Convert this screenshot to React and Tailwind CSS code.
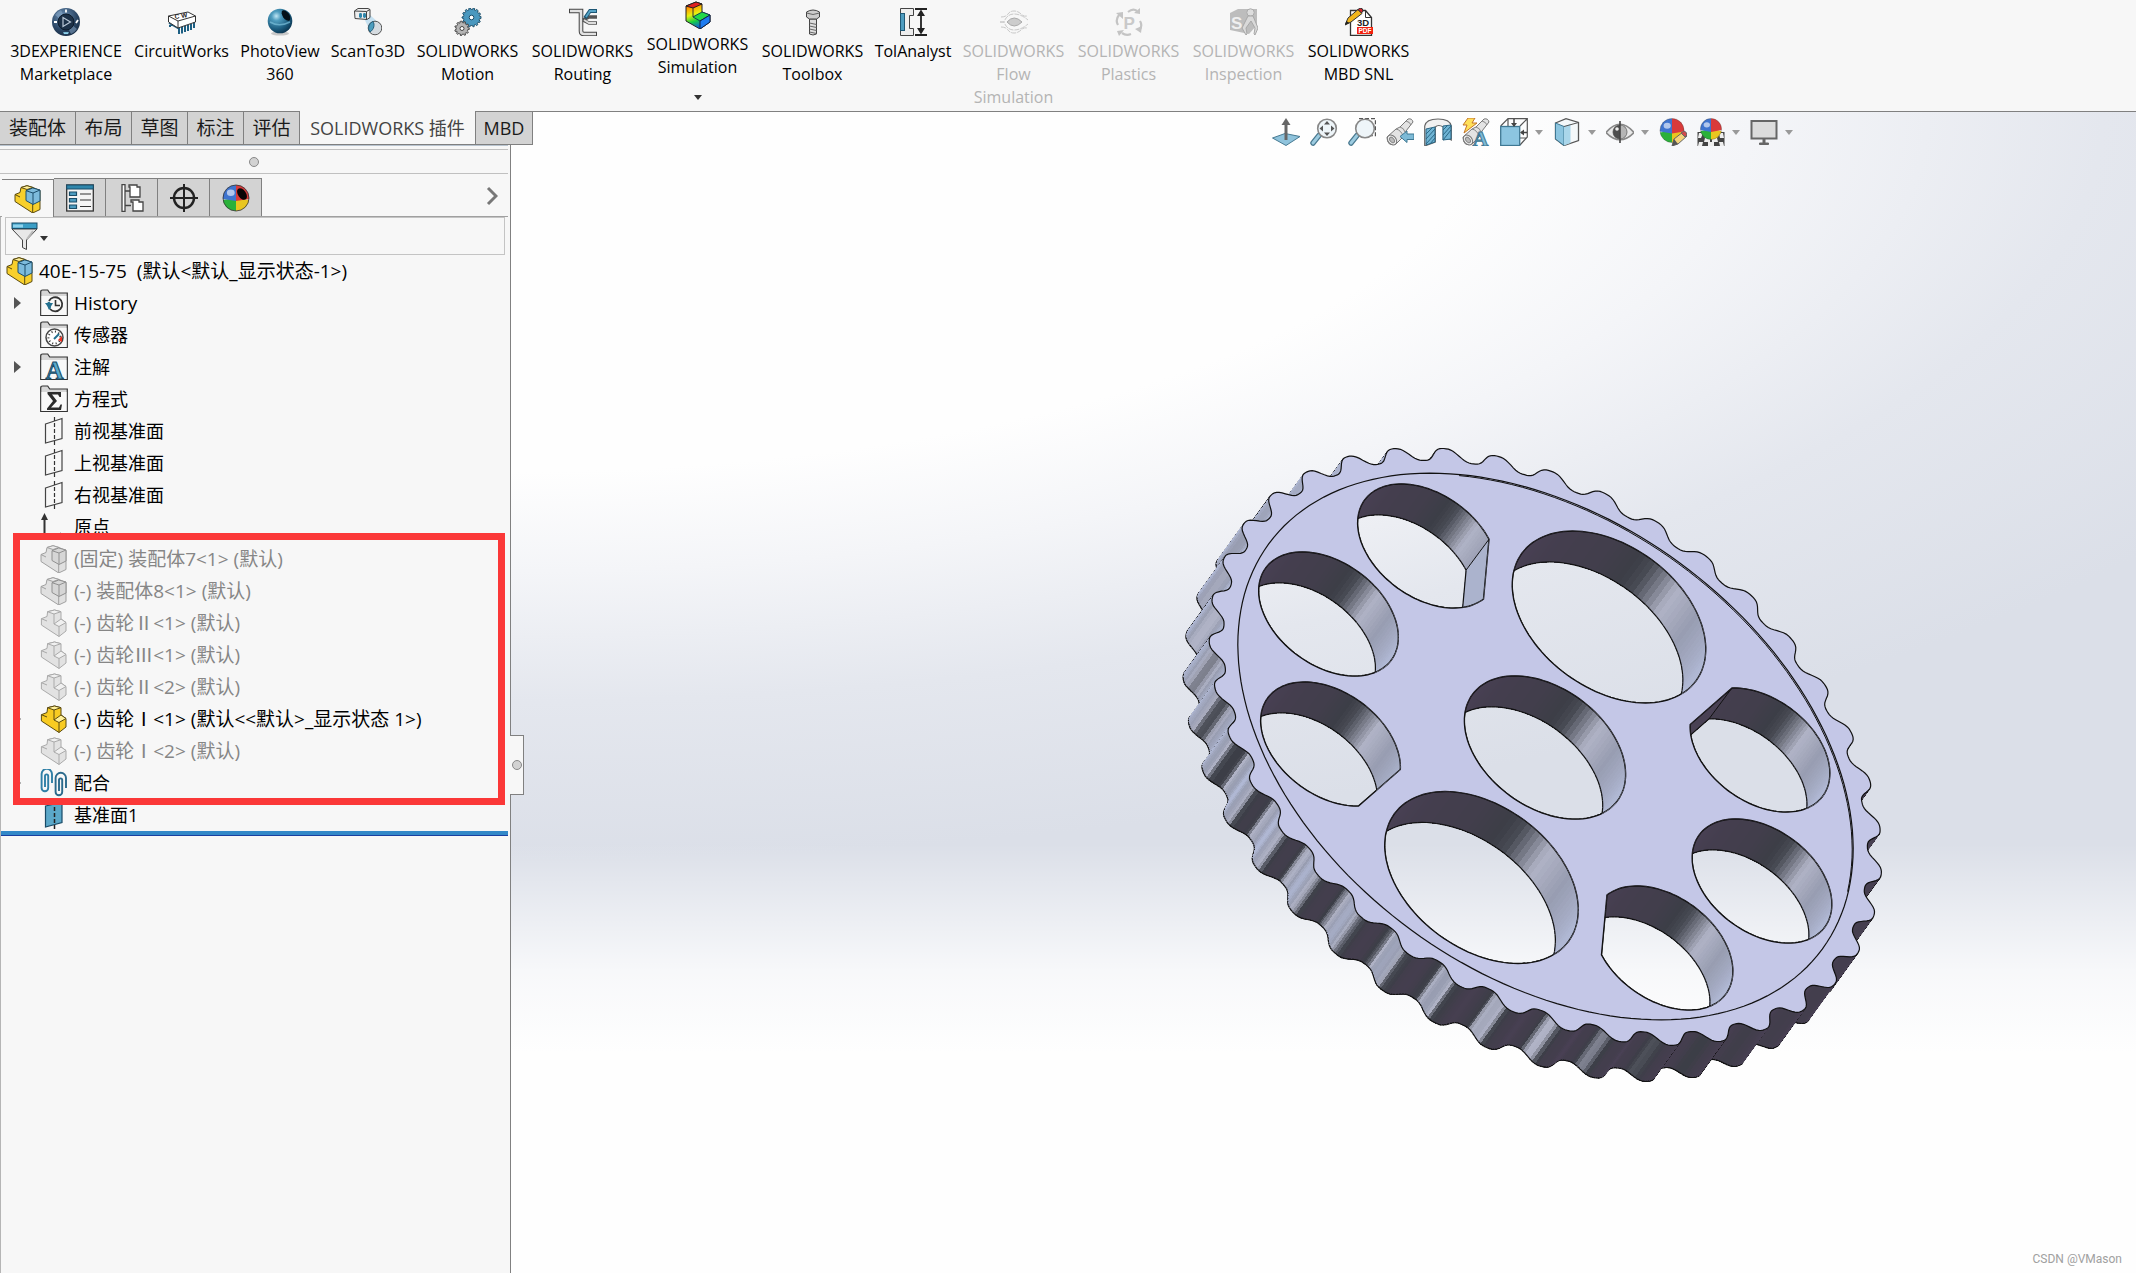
import { useState } from 'react';
import clsx from 'clsx';

const FONT = "font-['Open_Sans','Noto_Sans_CJK_SC',sans-serif]";

/* ---------- toolbar icons ---------- */

function Svg({ size = 28, children }) {
  return (
    <svg width={size} height={size} viewBox="0 0 28 28" fill="none" aria-hidden="true">
      {children}
    </svg>
  );
}

const gearPath = (cx, cy, r, depth, teeth) => {
  const pts = [];
  const n = teeth * 8;
  for (let i = 0; i < n; i++) {
    const t = (i / n) * Math.PI * 2;
    const k = r + (Math.cos(t * teeth) > 0 ? 0 : -depth);
    pts.push(`${(cx + k * Math.cos(t)).toFixed(2)} ${(cy + k * Math.sin(t)).toFixed(2)}`);
  }
  return `M${pts.join('L')}Z`;
};

const MarketplaceIcon = () => (
  <Svg>
    <defs>
      <radialGradient id="mk" cx="0.4" cy="0.3" r="0.8">
        <stop offset="0" stopColor="#6f93b8" />
        <stop offset="0.6" stopColor="#2b4766" />
        <stop offset="1" stopColor="#14263c" />
      </radialGradient>
    </defs>
    <circle cx="14" cy="14" r="14" fill="url(#mk)" />
    <path d="M3 7A13 13 0 0 1 9 2L12 8 8 11ZM25 21a13 13 0 0 1-6 5l-3-6 4-3Z" fill="#8fb0d0" opacity="0.5" />
    <circle cx="14" cy="14" r="8" fill="#1d3148" stroke="#0e1c2c" />
    <path d="M11 9.5v9l7.5-4.5Z" stroke="#b9c7d6" strokeWidth="1.2" />
    <path d="M14 1.5v3M2 14h3M24 15l2-3" stroke="#fff" strokeWidth="1.8" />
    <path d="M12 24c0 2 2 2 2 0 0 2 2 2 2 0" stroke="#8fd3ee" strokeWidth="1.4" />
  </Svg>
);

const CircuitIcon = () => (
  <Svg>
    <path d="M1 15l9 5v-6M2 14v5M11 19v7M14 18.5v7M17 18v6M20 17v6M23 16v6M26 14v6" stroke="#1d5f83" strokeWidth="2" />
    <path d="M.5 8 20 4l7.5 4v6L10 20 .5 14Z" fill="#fff" stroke="#333" />
    <path d="M.5 8 10 13l17.5-5M10 13v7" stroke="#333" />
    <text x="7" y="11" fontSize="6.5" fontWeight="700" fill="#222" fontFamily="Liberation Sans" transform="rotate(-9 7 11)">C W</text>
  </Svg>
);

const PhotoViewIcon = () => (
  <Svg>
    <defs>
      <radialGradient id="pv" cx="0.35" cy="0.3" r="0.75">
        <stop offset="0" stopColor="#bfe6f5" />
        <stop offset="0.25" stopColor="#4f9dbf" />
        <stop offset="0.7" stopColor="#1c5d80" />
        <stop offset="1" stopColor="#0c3550" />
      </radialGradient>
    </defs>
    <ellipse cx="14" cy="25.5" rx="9" ry="2" fill="#999" opacity="0.5" />
    <circle cx="14" cy="13" r="12.3" fill="url(#pv)" />
    <ellipse cx="20" cy="7.5" rx="3.3" ry="6" transform="rotate(-35 20 7.5)" fill="#041018" />
    <path d="M4 14c5 3 12 4 20 0" stroke="#7cc1dc" opacity="0.7" strokeWidth="1.5" />
  </Svg>
);

const ScanIcon = () => (
  <Svg>
    <path d="M9 8l6-2 12 11-10 8Z" fill="#bcdcee" opacity="0.85" />
    <path d="M.5 3 4 .5h10l2 1v8l-3 2-12-1Z" fill="#eee" stroke="#444" />
    <path d="M.5 3l12 .5L16 1.5M12.500 3.500v8" stroke="#444" />
    <rect x="5" y="5" width="3" height="5" rx="1.400" fill="#2f86ab" />
    <rect x="9" y="5" width="3" height="5" rx="1.400" fill="#2f86ab" />
    <circle cx="21" cy="20" r="6.8" fill="#d5dbe0" stroke="#555" />
    <path d="M16 24A6.8 6.8 0 0 1 19 13.5c2 3 1 8-3 10.5Z" fill="#4c9dbe" stroke="#245f7b" />
  </Svg>
);

const MotionIcon = () => (
  <Svg>
    <path d={gearPath(17.5, 9.5, 9.5, 1.5, 14)} fill="#4a98bf" stroke="#1d4d68" />
    <circle cx="17.5" cy="9.5" r="2.3" fill="#fff" stroke="#1d4d68" />
    <path d={gearPath(8, 20.5, 7.3, 1.5, 11)} fill="#b5b5b5" stroke="#444" />
    <circle cx="8" cy="20.5" r="2" fill="#fff" stroke="#444" />
  </Svg>
);

const RoutingIcon = () => (
  <Svg>
    <path d="M0 3h12v20q0 3 3 3h13" stroke="#444" strokeWidth="4.6" />
    <path d="M1 3h11v20q0 3 3 3h12" stroke="#e2e2e2" strokeWidth="2.6" />
    <path d="M28 9h-8l-6 3M28 15h-8l-6-3" stroke="#555" strokeWidth="3.6" />
    <path d="M27 15h-7l-5-3" stroke="#ddd" strokeWidth="1.8" />
    <path d="M28 3h-7l-5 7" stroke="#1d5775" strokeWidth="3.8" />
    <path d="M27 3h-6l-4 6" stroke="#57a5c8" strokeWidth="1.8" />
  </Svg>
);

const SimulationIcon = () => (
  <Svg>
    <defs>
      <linearGradient id="sim" x1="0" y1="0" x2="0.3" y2="1">
        <stop offset="0" stopColor="#f01818" />
        <stop offset="0.25" stopColor="#ff9d00" />
        <stop offset="0.5" stopColor="#e8f010" />
        <stop offset="0.75" stopColor="#18d040" />
        <stop offset="1" stopColor="#1060e0" />
      </linearGradient>
    </defs>
    <path d="M2 5 12 1l6 2v8l8 3v7l-10 7L2 20Z" fill="url(#sim)" stroke="#222" />
    <path d="M9 16l9-5 8 3-10 6Z" fill="#20d84a" stroke="#145" />
    <path d="M16 20v8l10-7v-7Z" fill="#1d7bf0" stroke="#124" />
    <path d="M2 5 12 1l6 2-9 4Z" fill="#e02020" stroke="#222" />
    <path d="M9 7v9" stroke="#333" />
  </Svg>
);

const BoltIcon = () => (
  <Svg>
    <path d="M10.5 11h7v15q-3.5 2-7 0Z" fill="#ddd" stroke="#444" />
    <path d="M10.5 15l7 1.5M10.5 18l7 1.5M10.5 21l7 1.5M10.5 24l7 1.5" stroke="#666" />
    <path d="M7.5 4q6.5-4 13 0v5l-3 2h-7l-3-2Z" fill="#ccc" stroke="#444" />
    <path d="M7.5 5q6.5 3 13 0" stroke="#666" />
  </Svg>
);

const TolIcon = () => (
  <Svg>
    <path d="M1.5 .5h13v7h-4v13h4v7h-13Z" fill="#eee" stroke="#444" />
    <rect x="1.5" y="5.5" width="4" height="17" fill="#4d9cc0" stroke="#1d5775" />
    <path d="M16 1h12M16 27h12M22 3v22" stroke="#222" strokeWidth="1.8" />
    <path d="M22 1.5l4 6.5h-8ZM22 26.5l4-6.5h-8Z" fill="#222" />
  </Svg>
);

const FlowIcon = () => (
  <Svg>
    <path d="M7 14q7-8 15 0-8 8-15 0Z" fill="#ccc" stroke="#aaa" />
    <path
      d="M0 14h4q3-8 10-8t14 6M0 14h4q3 8 10 8t14-6M1 9q5 0 7-3t6-3 7 3 6 2M1 19q5 0 7 3t6 3 7-3 6-2"
      stroke="#c8c8c8"
      strokeDasharray="5 1"
    />
  </Svg>
);

const PlasticsIcon = () => (
  <Svg>
    <text x="8.5" y="20.5" fontSize="17" fontWeight="700" fill="#c9c9c9" fontFamily="Liberation Sans">P</text>
    <path d="M13 4q5-4 9-1M25 13q3 5-1 10M16 26q-5 2-9-1M3 17q-3-5 1-10" stroke="#c4c4c4" strokeWidth="2.2" />
    <path d="M19 5l6 1V0ZM20 21l6 4 1-7ZM9 22l-7 1 2 5ZM1 5l7 6V4Z" fill="#c4c4c4" />
  </Svg>
);

const InspectionIcon = () => (
  <Svg>
    <path d="M0 5 8 1h19v16l-8 9-19-4Z" fill="#bdbdbd" />
    <text x="1" y="21" fontSize="17" fontWeight="700" fill="#efefef" fontFamily="Liberation Sans">S</text>
    <circle cx="20.5" cy="4.5" r="3.7" fill="#ddd" stroke="#aaa" />
    <path d="M18 8h5l5 12-3 7-1-1 1-6-4-7-5 7 1 6-1 1-4-7Z" fill="#d9d9d9" stroke="#a8a8a8" />
  </Svg>
);

const MbdIcon = () => (
  <Svg>
    <path d="M5.5 2.5h15l6 7v18h-21Z" fill="#fff" stroke="#333" strokeWidth="1.3" />
    <path d="M20.5 2.5v7h6" stroke="#333" />
    <text x="12" y="18" fontSize="9.5" fontWeight="700" fill="#222" fontFamily="Liberation Sans">3D</text>
    <rect x="12" y="19" width="16" height="7" fill="#f3200e" />
    <text x="13.5" y="25" fontSize="6.5" fontWeight="700" fill="#fff" fontFamily="Liberation Sans">PDF</text>
    <path d="M0 17l3-7L13 1.5l4 4L6 14Z" fill="#f2b61c" stroke="#333" />
    <path d="M13 1.5 15 0q3 0 3 3l-1.5 2Z" fill="#d5262c" stroke="#333" />
    <path d="M0 17l1.5-4 3 2Z" fill="#222" />
  </Svg>
);

/* ---------- tree icons ---------- */

function AssemblyIcon({ muted }) {
  const line = muted ? '#a0a0a0' : '#5a4a10';
  const body = muted ? '#e0e0e0' : '#f8d02c';
  const top = muted ? '#ececec' : '#fff09a';
  const cube = muted ? '#909090' : '#1c4e6c';
  return (
    <Svg>
      <path d="M1 9.5 6 7.5 7 2.5 13 .7l6 1.8 7 3v19L18.7 28 1 16.5Z" fill={body} stroke={line} />
      <path d="M7 2.5 13 .7l6 1.8-6 2Z" fill={top} stroke={line} />
      <path d="M18.7 19v9M1 9.5l5 2.5" stroke={line} />
      <path d="M12 5.7 18.7 3 26 5v11l-7 3.5-7-4Z" fill={muted ? '#d6d6d6' : '#7dbbdc'} stroke={cube} />
      <path d="M12 5.7 19 8l7-3M19 8v11" stroke={cube} />
    </Svg>
  );
}

function PartIcon({ muted }) {
  const line = muted ? '#aaa' : '#5a4a10';
  return (
    <Svg>
      <path
        d="M1.4 9.7 7 7.5 7.6 2.7 14.500 1 21 2.7V10l5 3.500V22l-7 5.500L1.4 16Z"
        fill={muted ? '#e2e2e2' : '#f8cb22'}
        stroke={line}
      />
      <path d="M7.6 2.7 14.5 1 21 2.7 14 5ZM14 15l7-5 5 3.500-7 4Z" fill={muted ? '#f0f0f0' : '#fff09a'} stroke={line} />
      <path d="M14 5v10M19 17.5v10M1.4 9.7 7 12" stroke={line} />
    </Svg>
  );
}

function FolderIcon({ children }) {
  return (
    <Svg>
      <path d="M.7 26.5V3q0-2 2-2h5l2 3h17.600v22.500Z" fill="#d6d6d6" stroke="#333" strokeWidth="1.2" />
      <path d="M1.500 7h25v19h-25Z" fill="#f8f8f8" />
      {children}
    </Svg>
  );
}

const HistoryIcon = () => (
  <FolderIcon>
    <path d="M9 12a7 7 0 1 1 1 8" stroke="#333" strokeWidth="1.8" />
    <path d="M15.5 11v5.5H20" stroke="#333" strokeWidth="1.6" />
    <path d="M5 14h8l-3.5 6Z" fill="#23708f" />
    <path d="M10 20q-2-3-1-7" stroke="#23708f" strokeWidth="2.5" />
  </FolderIcon>
);

const SensorIcon = () => (
  <FolderIcon>
    <circle cx="14.5" cy="16.5" r="8.5" fill="#fff" stroke="#444" strokeWidth="1.5" />
    <circle cx="14.5" cy="16.5" r="6" stroke="#333" strokeWidth="2" strokeDasharray="1 2.5" />
    <path d="M14 18l5-5" stroke="#23708f" strokeWidth="2" />
    <path d="M22 15v6l-4-2Z" fill="#f03020" />
  </FolderIcon>
);

const NoteIcon = () => (
  <FolderIcon>
    <text x="5.5" y="25.5" fontSize="25" fontWeight="700" fill="#5aaacb" stroke="#184a66" fontFamily="Liberation Serif">A</text>
  </FolderIcon>
);

const EquationIcon = () => (
  <FolderIcon>
    <path d="M7.5 7H21v5h-1.5L18 9.5h-6l5 6.5-6 6.5h8l1.5-3H22l-1 5.500H7v-1.500l6-7.500-5.500-7Z" fill="#2b2b2b" />
  </FolderIcon>
);

const PlaneIcon = () => (
  <Svg>
    <path d="M5.5 7 22 1.5v20L5.5 26Z" stroke="#444" strokeWidth="1.2" />
    <path d="M14.5 0v28" stroke="#333" strokeWidth="1.2" strokeDasharray="4 2" />
  </Svg>
);

const SolidPlaneIcon = () => (
  <Svg>
    <path d="M5.5 5 22 1.5v20L5.5 26Z" fill="#5ba8c9" stroke="#184a66" strokeWidth="1.2" />
    <path d="M14.5 0v28" stroke="#222" strokeWidth="1.5" strokeDasharray="4 2" />
  </Svg>
);

const OriginIcon = () => (
  <Svg>
    <path d="M4.5 5v18h16" stroke="#333" strokeWidth="2" />
    <path d="M4.5 0 8 7H1ZM27 23l-7 3.5v-7Z" fill="#333" />
  </Svg>
);

const MatesIcon = () => (
  <Svg>
    <path d="M12 14V5a5.2 5.2 0 0 0-10.4 0v14a3.3 3.3 0 0 0 6.6 0V7a1.6 1.6 0 0 0-3.2 0v11" stroke="#2f7fa6" strokeWidth="1.9" />
    <path d="M26 19V9a5.2 5.2 0 0 0-10.4 0v14a3.3 3.3 0 0 0 6.6 0V11a1.6 1.6 0 0 0-3.2 0v11" stroke="#2b6a8c" strokeWidth="1.9" />
  </Svg>
);

/* ---------- panel tab icons ---------- */

const PropertyIcon = () => (
  <Svg>
    <rect x=".7" y="1" width="26.6" height="26" fill="#f4f4f4" stroke="#333" strokeWidth="1.3" />
    <rect x=".7" y="1" width="26.6" height="4" fill="#2f86ab" stroke="#1b4d68" />
    <path d="M3.5 8h7v3.5h-7ZM3.5 14.5h7V18h-7ZM3.5 21h7v3.5h-7Z" fill="#4d9cc0" stroke="#1b4d68" strokeWidth="1.2" />
    <path d="M14 10h11M14 16h11M14 22.5h11" stroke="#333" strokeWidth="1.2" />
  </Svg>
);

const ConfigIcon = () => (
  <Svg>
    <path d="M4 .7h3v26.6H4ZM7 7h5M7 21.5h6" fill="#fff" stroke="#444" strokeWidth="1.3" />
    <path d="M11 1h8v2h3v10H12V3h-1ZM13 16h8v2h4v9H15v-9h-2Z" fill="#fff" stroke="#444" strokeWidth="1.3" />
  </Svg>
);

const DimXpertIcon = () => (
  <Svg>
    <circle cx="14" cy="14" r="10" stroke="#222" strokeWidth="2.4" />
    <path d="M14 0v28M0 14h28" stroke="#222" strokeWidth="2" />
  </Svg>
);

function ColorBall({ hole = true, cx = 14, cy = 14, r = 13 }) {
  return (
    <>
      <path d={`M${cx} ${cy}V${cy + r}A${r} ${r} 0 0 1 ${cx - r} ${cy + 2}Z`} fill="#2bb13a" />
      <path d={`M${cx} ${cy}V${cy + r}A${r} ${r} 0 0 0 ${cx + r} ${cy + 2}Z`} fill="#e9c61f" />
      <path d={`M${cx} ${cy + 3}L${cx - r} ${cy + 1}A${r} ${r} 0 0 1 ${cx} ${cy - r}Z`} fill="#3f74cf" />
      <path d={`M${cx} ${cy + 3}L${cx + r} ${cy + 1}A${r} ${r} 0 0 0 ${cx} ${cy - r}Z`} fill="#d93a3a" />
      <ellipse cx={cx - r * 0.4} cy={cy - r * 0.4} rx={r * 0.3} ry={r * 0.25} fill="#fff" opacity="0.6" />
      {hole && <ellipse cx={cx + 6} cy={cy - 4} rx="4" ry="6.5" transform={`rotate(-35 ${cx + 6} ${cy - 4})`} fill="#0a0505" />}
      <circle cx={cx} cy={cy} r={r} stroke="#333" strokeOpacity={hole ? 0.8 : 0.3} />
    </>
  );
}

const DisplayIcon = () => (
  <Svg>
    <ColorBall />
  </Svg>
);

const FilterIcon = () => (
  <Svg>
    <path d="M1 7 11.5 18v7.5l4 2V18L26 7Z" fill="#e8e8e8" stroke="#444" />
    <path d="M16 17l6-8" stroke="#bbb" strokeWidth="2" />
    <rect x="1" y="1" width="25" height="5.5" fill="#3b9ec6" stroke="#1b4d68" />
    <path d="M2 2.5h10v3H2Z" fill="#8ed2ec" />
  </Svg>
);

/* ---------- heads-up view icons ---------- */

const NormalToIcon = () => (
  <Svg>
    <path d="M.5 20 13 15.5l15 3L14 27.5Z" fill="#8fc3dc" stroke="#477a92" />
    <path d="M14 5v17" stroke="#666" strokeWidth="3" />
    <path d="M14 0l4.500 7h-9Z" fill="#666" />
  </Svg>
);

const Lens = () => (
  <>
    <path d="M9 17.5 3 25" stroke="#48788f" strokeWidth="5.500" strokeLinecap="round" />
    <path d="M9 17.5 3 25" stroke="#9ccbe0" strokeWidth="3" strokeLinecap="round" />
    <circle cx="17" cy="10.5" r="9.3" fill="#eef5f9" stroke="#888" strokeWidth="1.6" />
  </>
);

const ZoomFitIcon = () => (
  <Svg>
    <Lens />
    <path d="M17 3l3 3.5h-6ZM17 18l3-3.5h-6ZM9.5 10.5l3.5-3v6ZM24.500 10.500l-3.500-3v6Z" fill="#555" />
  </Svg>
);

const ZoomAreaIcon = () => (
  <Svg>
    <path d="M11 .6h16.4v17H22" stroke="#555" strokeWidth="1.2" strokeDasharray="4 2" />
    <Lens />
  </Svg>
);

const Telescope = () => (
  <>
    <path d="M1 19 10 11l4-2 8-8q4-1 5 3l-7 9-2 5-8 8Q1 29 1 19Z" fill="#e3e3e3" stroke="#777" />
    <path d="M10 11q5 1 7 7M14 9q4 1 5 5M20 3q4 1 5 4" stroke="#888" />
    <ellipse cx="6" cy="22" rx="4" ry="5.5" transform="rotate(-40 6 22)" fill="#f4f4f4" stroke="#777" />
    <ellipse cx="6" cy="22" rx="2" ry="3.2" transform="rotate(-40 6 22)" fill="#bbb" stroke="#888" />
  </>
);

const PreviousViewIcon = () => (
  <Svg>
    <Telescope />
    <path d="M14 18.5l7-5.5v3h7v5.500h-7v3Z" fill="#7dbad6" stroke="#3f7893" />
  </Svg>
);

const SectionIcon = () => (
  <Svg>
    <path d="M.7 8Q2 1 14 1t13.3 7v14q-6-4-8 0V9q-5-3-8 0v15l-10.600 4Z" fill="#f1f1f1" stroke="#666" strokeWidth="1.2" />
    <path d="M2 11 11 9v15l-9 3ZM19 8l8-1v14l-8 1Z" fill="#6fb4d4" stroke="#2c6785" />
    <path d="M2 16l6-6M2 21l9-10M2 26l9-10M6 26l5-6M19 12l5-5M19 17l8-9M19 22l8-10" stroke="#2c6785" />
  </Svg>
);

const DynamicIcon = () => (
  <Svg>
    <Telescope />
    <path d="M6 0h7l-3 5h5L2 15l3-8H1Z" fill="#ffe05a" stroke="#c4752a" />
    <text x="10.5" y="27.5" fontSize="22" fontWeight="700" fill="#7dbad6" stroke="#3f7893" fontFamily="Liberation Serif">A</text>
  </Svg>
);

const OrientationIcon = () => (
  <Svg>
    <path d="M.7 8 8 .7h19.3V19L20 27M8 .7V8M20 8l7-7M20 20h7" stroke="#555" strokeWidth="1.2" />
    <rect x=".7" y="8.5" width="19" height="19" fill="#8cc5e0" stroke="#3f7893" strokeWidth="1.3" />
    <path d="M14 1v7M21 14.5h6" stroke="#444" strokeWidth="1.5" />
    <path d="M14 9l-3-4h6ZM20 14.5l4-3v6Z" fill="#444" />
  </Svg>
);

const DisplayStyleIcon = () => (
  <Svg>
    <path d="M2.5 5 13 .7 25.5 4.5v18L11 27.500 2.500 21Z" fill="#f4f8fa" stroke="#555" strokeWidth="1.3" />
    <path d="M2.5 5 11 8.5v19L2.5 21Z" fill="#8cc5e0" stroke="#3f7893" />
    <path d="M11 8.5 17.5 6v19L11 27.5Z" fill="#aad6ea" />
    <path d="M11 8.5 25.500 4.500" stroke="#555" />
  </Svg>
);

const EyeIcon = () => (
  <Svg>
    <path d="M0 14.5Q14-2 28 14.5 14 29 0 14.5Z" fill="#e9e9e9" stroke="#888" strokeWidth="1.6" />
    <circle cx="14" cy="14" r="7" fill="#b5b5b5" stroke="#777" />
    <path d="M14 7a7 7 0 0 0 0 14Z" fill="#4d4d4d" />
    <circle cx="11" cy="11" r="1.8" fill="#eee" />
    <path d="M14 3v22" stroke="#444" strokeWidth="1.600" />
  </Svg>
);

const AppearanceIcon = () => (
  <Svg>
    <ColorBall hole={false} cx={13} cy={12.5} r={12} />
    <path d="M13 28l2-7 9-7 4 4-9 8Z" fill="#f4d37a" stroke="#666" />
    <path d="M22 15l3-2q3 1 3 4l-2 2Z" fill="#d04a4a" stroke="#666" />
    <path d="M13 28l2-7 4 5Z" fill="#555" />
  </Svg>
);

const SceneIcon = () => (
  <Svg>
    <rect x=".5" y="14" width="27" height="14" fill="#444" />
    <path d="M2 15h4l-2 5H1ZM8 20h5v4H7ZM15 20h5l1 4h-6ZM22 15h4l1 5h-4ZM2 24h4l-1 4H1ZM22 24h4l1 4h-4ZM11 24h6v4h-6Z" fill="#eee" />
    <ColorBall hole={false} cx={14} cy={11} r={10.5} />
  </Svg>
);

const ViewSettingsIcon = () => (
  <Svg>
    <rect x="1.5" y="3" width="25" height="17.5" fill="#dcdcdc" stroke="#666" strokeWidth="2" />
    <path d="M13 21h2v4h3.5v1.500h-9V25H13Z" fill="#666" stroke="#666" />
  </Svg>
);

/* ---------- data ---------- */

const addins = [
  { lines: ['3DEXPERIENCE', 'Marketplace'], icon: MarketplaceIcon, width: 'w-[116px]' },
  { lines: ['CircuitWorks'], icon: CircuitIcon, width: 'w-[95px]' },
  { lines: ['PhotoView', '360'], icon: PhotoViewIcon, width: 'w-[82px]' },
  { lines: ['ScanTo3D'], icon: ScanIcon, width: 'w-[74px]' },
  { lines: ['SOLIDWORKS', 'Motion'], icon: MotionIcon, width: 'w-[105px]' },
  { lines: ['SOLIDWORKS', 'Routing'], icon: RoutingIcon, width: 'w-[105px]' },
  { lines: ['SOLIDWORKS', 'Simulation'], icon: SimulationIcon, width: 'w-[105px]', menu: true },
  { lines: ['SOLIDWORKS', 'Toolbox'], icon: BoltIcon, width: 'w-[105px]' },
  { lines: ['TolAnalyst'], icon: TolIcon, width: 'w-[76px]' },
  { lines: ['SOLIDWORKS', 'Flow', 'Simulation'], icon: FlowIcon, width: 'w-[105px]', disabled: true },
  { lines: ['SOLIDWORKS', 'Plastics'], icon: PlasticsIcon, width: 'w-[105px]', disabled: true },
  { lines: ['SOLIDWORKS', 'Inspection'], icon: InspectionIcon, width: 'w-[105px]', disabled: true },
  { lines: ['SOLIDWORKS', 'MBD SNL'], icon: MbdIcon, width: 'w-[105px]' },
];

const tabs = [
  { label: '装配体', width: 'w-[76px] text-[19px]' },
  { label: '布局', width: 'w-[56px] text-[19px]' },
  { label: '草图', width: 'w-[56px] text-[19px]' },
  { label: '标注', width: 'w-[56px] text-[19px]' },
  { label: '评估', width: 'w-[56px] text-[19px]' },
  { label: 'SOLIDWORKS 插件', width: 'w-[175px] text-lg' },
  { label: 'MBD', width: 'w-[58px] text-lg' },
];

const panelTabs = [
  { name: 'FeatureManager', icon: AssemblyIcon },
  { name: 'PropertyManager', icon: PropertyIcon },
  { name: 'ConfigurationManager', icon: ConfigIcon },
  { name: 'DimXpertManager', icon: DimXpertIcon },
  { name: 'DisplayManager', icon: DisplayIcon },
];

const features = [
  { label: 'History', icon: HistoryIcon, expandable: true },
  { label: '传感器', icon: SensorIcon },
  { label: '注解', icon: NoteIcon, expandable: true },
  { label: '方程式', icon: EquationIcon },
  { label: '前视基准面', icon: PlaneIcon },
  { label: '上视基准面', icon: PlaneIcon },
  { label: '右视基准面', icon: PlaneIcon },
  { label: '原点', icon: OriginIcon },
];

const components = [
  { label: '(固定) 装配体7<1> (默认)', icon: AssemblyIcon, muted: true },
  { label: '(-) 装配体8<1> (默认)', icon: AssemblyIcon, muted: true },
  { label: '(-) 齿轮Ⅱ<1> (默认)', icon: PartIcon, muted: true },
  { label: '(-) 齿轮Ⅲ<1> (默认)', icon: PartIcon, muted: true },
  { label: '(-) 齿轮Ⅱ<2> (默认)', icon: PartIcon, muted: true },
  { label: '(-) 齿轮Ⅰ<1> (默认<<默认>_显示状态 1>)', icon: PartIcon, expandable: true },
  { label: '(-) 齿轮Ⅰ<2> (默认)', icon: PartIcon, muted: true },
  { label: '配合', icon: MatesIcon, expandable: true },
];

const viewTools = [
  { name: '正视于', icon: NormalToIcon },
  { name: '整屏显示全图', icon: ZoomFitIcon },
  { name: '局部放大', icon: ZoomAreaIcon },
  { name: '上一视图', icon: PreviousViewIcon },
  { name: '剖面视图', icon: SectionIcon },
  { name: '动态注解视图', icon: DynamicIcon },
  { name: '视图定向', icon: OrientationIcon, menu: true },
  { name: '显示样式', icon: DisplayStyleIcon, menu: true },
  { name: '隐藏/显示项目', icon: EyeIcon, menu: true },
  { name: '编辑外观', icon: AppearanceIcon },
  { name: '应用布景', icon: SceneIcon, menu: true },
  { name: '视图设定', icon: ViewSettingsIcon, menu: true },
];

/* ---------- gear model ---------- */

const RAD = Math.PI / 180;
const TILT = 36.2 * RAD;
const RATIO = 0.663; // minor / major axis of a face circle
const CENTER = [1034.5, 634.5];
const TEETH = 39;
const PHASE = 152.7 * RAD;
const RIM_DEPTH = [-26, 36];
const WEB_DEPTH = [-23, 31];

const E1 = [Math.cos(TILT), Math.sin(TILT)];
const E2 = [-Math.sin(TILT), Math.cos(TILT)];

const project = (c, r, t) => {
  const a = r * Math.cos(t);
  const b = r * RATIO * Math.sin(t);
  return [c[0] + a * E1[0] + b * E2[0], c[1] + a * E1[1] + b * E2[1]];
};

const add = (p, d) => [p[0] + d[0], p[1] + d[1]];
const fmt = (p) => `${p[0].toFixed(1)} ${p[1].toFixed(1)}`;
const poly = (pts) => `M${pts.map(fmt).join('L')}Z`;

// reflection of the scene by the angle of the surface normal
const SHADES = [
  [-70, [78, 66, 92]],
  [-10, [76, 66, 88]],
  [40, [68, 62, 78]],
  [68, [66, 62, 76]],
  [84, [60, 62, 71]],
  [92, [72, 75, 84]],
  [101, [120, 123, 136]],
  [111, [176, 179, 198]],
  [130, [152, 157, 177]],
  [165, [176, 184, 212]],
  [250, [180, 188, 216]],
];

const shade = (angle) => {
  let a = ((angle % 360) + 360) % 360;
  if (a > 250) a -= 360;
  for (let i = 1; i < SHADES.length; i++) {
    const [a0, c0] = SHADES[i - 1];
    const [a1, c1] = SHADES[i];
    if (a <= a1) {
      const k = Math.max(0, (a - a0) / (a1 - a0));
      return `rgb(${c0.map((v, j) => Math.round(v + (c1[j] - v) * k)).join(',')})`;
    }
  }
  return 'rgb(180,188,216)';
};

// rounded teeth: a cosine with flattened crests
const rimRadius = (t) => {
  const s = Math.cos(TEETH * (t - PHASE));
  return 367 + 8 * (1.35 * s - 0.35 * s * s * s);
};

const rimSlope = (t) => {
  const x = TEETH * (t - PHASE);
  const s = Math.cos(x);
  return (-8 * TEETH * Math.sin(x) * (1.35 - 1.05 * s * s)) / rimRadius(t);
};

const buildRim = () => {
  const n = TEETH * 24;
  const pts = [];
  for (let i = 0; i < n; i++) {
    const t = (i / n) * Math.PI * 2;
    pts.push({ t, p: project(CENTER, rimRadius(t), t) });
  }
  const quads = pts.map((a, i) => {
    const b = pts[(i + 1) % n];
    const nx = b.p[1] - a.p[1];
    const ny = a.p[0] - b.p[0];
    const tm = a.t + Math.PI / n;
    return {
      a: a.p,
      b: b.p,
      visible: nx * RIM_DEPTH[0] + ny * RIM_DEPTH[1] > 0,
      color: shade((tm - Math.atan(rimSlope(tm))) / RAD),
    };
  });
  quads.forEach((q, i) => {
    q.startEdge = q.visible && !quads[(i + n - 1) % n].visible;
    q.endEdge = q.visible && !quads[(i + 1) % n].visible;
    q.key = (q.a[0] + q.b[0]) * E2[0] + (q.a[1] + q.b[1]) * E2[1];
  });
  return {
    outline: poly(pts.map((q) => q.p)),
    quads: quads.filter((q) => q.visible).sort((x, y) => x.key - y.key),
  };
};

const HOLES = [
  { c: [1034, 635.5], r: 90 },
  { c: [1098, 505], r: 108 },
  { c: [970.5, 765.5], r: 108 },
  { c: [817.5, 502], r: 78 },
  { c: [1251, 769], r: 78 },
  { c: [916.5, 434], r: 78, cut: [-54.2, 10.8] },
  { c: [1152, 836], r: 78, cut: [125.8, 190.8] },
  { c: [819.5, 632], r: 78, cut: [-23.6, 40.5] },
  { c: [1249, 638], r: 78, cut: [156.4, 220.5] },
];

const buildHole = ({ c, r, cut }) => {
  const from = cut ? cut[1] : 0;
  const to = cut ? cut[0] + 360 : 360;
  const n = 120;
  const pts = [];
  for (let i = 0; i <= n; i++) {
    const deg = from + ((to - from) * i) / n;
    pts.push({ deg, p: project(c, r, deg * RAD) });
  }
  const quads = [];
  const total = cut ? n + 1 : n;
  for (let i = 0; i < total; i++) {
    const a = pts[i];
    const b = i < n ? pts[i + 1] : pts[0];
    const nx = a.p[1] - b.p[1];
    const ny = b.p[0] - a.p[0];
    const mid = i < n ? (a.deg + b.deg) / 2 : (cut[0] + cut[1]) / 2;
    if (nx * WEB_DEPTH[0] + ny * WEB_DEPTH[1] > 0) {
      quads.push({ a: a.p, b: b.p, color: shade(mid + 180), chord: i === n });
    }
  }
  return { outline: poly(pts.map((q) => q.p)), quads };
};

const rim = buildRim();
const holes = HOLES.map(buildHole);

const arc = (r, from, to, d) => {
  const pts = [];
  for (let t = from; t <= to; t += 2) pts.push(add(project(CENTER, r, t * RAD), d));
  return `M${pts.map(fmt).join('L')}`;
};

function Wall({ a, b, color, depth }) {
  return (
    <path
      d={poly([a, b, add(b, depth), add(a, depth)])}
      fill={color}
      stroke={color}
      strokeWidth="1"
      shapeRendering="crispEdges"
    />
  );
}

function GearModel() {
  return (
    <svg
      className="absolute inset-0 h-full w-full"
      viewBox="0 0 1625 1161"
      preserveAspectRatio="xMinYMin meet"
      role="img"
      aria-label="齿轮Ⅰ"
    >
      <defs>
        {holes.map((h, i) => (
          <clipPath id={`hole-${i}`} key={i}>
            <path d={h.outline} />
          </clipPath>
        ))}
        <mask id="web" maskUnits="userSpaceOnUse" x="0" y="0" width="1625" height="1161">
          <rect width="1625" height="1161" fill="#fff" />
          {holes.map((h, i) => (
            <path d={h.outline} fill="#000" key={i} />
          ))}
        </mask>
      </defs>

      <g mask="url(#web)">
        {rim.quads.map((q, i) => {
          const a2 = add(q.a, RIM_DEPTH);
          const b2 = add(q.b, RIM_DEPTH);
          return (
            <g key={i}>
              <Wall a={q.a} b={q.b} color={q.color} depth={RIM_DEPTH} />
              <path d={`M${fmt(a2)}L${fmt(b2)}`} stroke="#111" strokeWidth="1.2" strokeLinecap="round" />
              {q.startEdge && <path d={`M${fmt(q.a)}L${fmt(a2)}`} stroke="#111" />}
              {q.endEdge && <path d={`M${fmt(q.b)}L${fmt(b2)}`} stroke="#111" />}
            </g>
          );
        })}
      </g>

      <path
        d={rim.outline + holes.map((h) => h.outline).join('')}
        fill="#c4c7e7"
        fillRule="evenodd"
        stroke="#111"
        strokeWidth="1.2"
      />
      <path d={arc(343, 0, 360, [0, 0])} fill="none" stroke="#111" strokeWidth="1.2" />
      <path d={arc(343, 228, 345, [-1, 1])} fill="none" stroke="#111" />

      {holes.map((h, i) => (
        <g key={i} clipPath={`url(#hole-${i})`}>
          {h.quads.map((q, j) => (
            <Wall a={q.a} b={q.b} color={q.color} depth={WEB_DEPTH} key={j} />
          ))}
          {h.quads.map((q, j) => (
            <path d={`M${fmt(add(q.a, WEB_DEPTH))}L${fmt(add(q.b, WEB_DEPTH))}`} stroke="#111" strokeWidth="1.2" key={j} />
          ))}
          {h.quads.filter((q) => q.chord).map((q) => (
            <path
              key="chord"
              d={`M${fmt(q.a)}L${fmt(add(q.a, WEB_DEPTH))}M${fmt(q.b)}L${fmt(add(q.b, WEB_DEPTH))}`}
              stroke="#111"
            />
          ))}
          <path d={h.outline} fill="none" stroke="#111" strokeWidth="1.6" />
        </g>
      ))}
    </svg>
  );
}

/* ---------- layout ---------- */

function CaretDown({ className }) {
  return (
    <svg width="8" height="5" viewBox="0 0 8 5" className={className} aria-hidden="true">
      <path d="M0 0h8L4 5Z" fill="currentColor" />
    </svg>
  );
}

function AddinBar() {
  return (
    <header className="flex h-28 shrink-0 items-start gap-2.5 border-b border-[#808080] bg-[#f7f7f7] pl-2">
      {addins.map(({ lines, icon: Icon, width, disabled, menu }) => (
        <button
          key={lines.join(' ')}
          disabled={disabled}
          className={clsx(
            'flex h-full shrink-0 flex-col items-center text-base leading-[23px]',
            width,
            menu ? 'pt-px' : 'pt-2',
            disabled ? 'text-[#b4b4b4]' : 'text-black'
          )}
        >
          <Icon />
          <span className="mt-1 flex flex-col whitespace-nowrap">
            {lines.map((line) => (
              <span key={line}>{line}</span>
            ))}
          </span>
          {menu && <CaretDown className="mt-4 text-[#333]" />}
        </button>
      ))}
    </header>
  );
}

function CommandTabs({ active, onSelect }) {
  return (
    <nav className="relative z-10 -mt-px flex h-[34px] w-max shrink-0">
      {tabs.map((tab, i) => (
        <button
          key={tab.label}
          onClick={() => onSelect(i)}
          className={clsx(
            'flex items-center justify-center border-b border-[#808080] leading-8 whitespace-nowrap',
            tab.width,
            i === active ? 'bg-[#f7f7f7] text-[#444]' : 'border-t border-r bg-[#d3d3d3] text-[#1a1a1a]',
            i === active + 1 && 'border-l'
          )}
        >
          {tab.label}
        </button>
      ))}
    </nav>
  );
}

function TreeRow({ label, icon: Icon, muted, expandable }) {
  return (
    <li className="flex h-8 items-center">
      <span className="flex w-10 shrink-0 pl-[14px]">
        {expandable && (
          <button aria-label={`展开 ${label}`}>
            <svg width="7" height="12" viewBox="0 0 7 12">
              <path d="M0 0l7 6-7 6Z" fill="#555" />
            </svg>
          </button>
        )}
      </span>
      <Icon muted={muted} />
      <span
        className={clsx(
          'ml-1.5 leading-8 whitespace-nowrap',
          /[A-Z<]/.test(label) ? 'text-[19px]' : 'text-lg',
          muted ? 'text-[#868686]' : 'text-black'
        )}
      >
        {label}
      </span>
    </li>
  );
}

function FeaturePanel() {
  const [active, setActive] = useState(0);

  return (
    <aside className="relative flex flex-1 flex-col border-r border-[#808080] bg-[#f7f7f7]">
      <div className="mr-0.5 flex h-[29px] flex-col items-center border-t border-b border-t-[#b8c4d0] border-b-[#c0c0c0] pt-[3px]">
        <div className="w-full border-t border-[#c0c0c0]" />
        <div className="mt-[7px] h-2.5 w-2.5 rounded-full border border-[#888] bg-[#d2d2d2]" />
      </div>

      {/* Manager tabs */}
      <div className="mr-0.5 flex h-[43px] items-end border-b border-[#a0a0a0]">
        {panelTabs.map(({ name, icon: Icon }, i) => (
          <button
            key={name}
            aria-label={name}
            onClick={() => setActive(i)}
            className={clsx(
              'flex h-[38px] w-[52px] items-center justify-center border-t border-r border-[#808080] first:ml-0.5',
              i === active ? '-mb-px bg-[#f7f7f7]' : 'bg-[#d3d3d3]'
            )}
          >
            <Icon />
          </button>
        ))}
        <button aria-label="更多" className="mr-2.5 mb-2.5 ml-auto">
          <svg width="12" height="20" viewBox="0 0 12 20" fill="none">
            <path d="M2 2l8 8-8 8" stroke="#777" strokeWidth="3" />
          </svg>
        </button>
      </div>

      <div className="flex flex-1 flex-col border-l border-[#b5b5b5]">
        <div className="mr-[5px] ml-1 flex h-[38px] shrink-0 items-center border border-[#c4c4c4] pl-[5px]">
          <button aria-label="过滤器" className="flex items-center gap-px">
            <FilterIcon />
            <CaretDown className="mt-1 text-[#333]" />
          </button>
          <input aria-label="过滤" className="ml-2 h-full min-w-0 flex-1 bg-transparent text-lg outline-none" />
        </div>

        {/* Feature tree */}
        <div className="flex h-8 shrink-0 items-center pl-[5px]">
          <AssemblyIcon />
          <span className="ml-[5px] text-[19px] leading-8 whitespace-pre text-black">
            {'40E-15-75  (默认<默认_显示状态-1>)'}
          </span>
        </div>
        <ul className="-ml-px">
          {features.map((f) => (
            <TreeRow key={f.label} {...f} />
          ))}
        </ul>
        <div className="relative -ml-px">
          <ul>
            {components.map((c) => (
              <TreeRow key={c.label} {...c} />
            ))}
          </ul>
          <div className="pointer-events-none absolute -top-2.5 right-[5px] -bottom-1.5 left-[13px] border-[7px] border-[#fb3838]" />
        </div>
        <ul className="-ml-px">
          <TreeRow label="基准面1" icon={SolidPlaneIcon} />
        </ul>
        <div className="mr-0.5 h-[5px] border-b border-[#1a3fa0] bg-[#3288c8]" />
      </div>

      {/* Splitter grip */}
      <button
        aria-label="折叠面板"
        className="absolute top-[590px] -right-[14px] z-10 flex h-[60px] w-[14px] items-center justify-center border border-l-0 border-[#808080] bg-[#f7f7f7]"
      >
        <span className="h-2.5 w-2.5 rounded-full border border-[#888] bg-[#d2d2d2]" />
      </button>
    </aside>
  );
}

function ViewToolbar() {
  return (
    <div className="relative ml-[46.8%] flex items-center gap-2.5 pt-1.5">
      {viewTools.map(({ name, icon: Icon, menu }) => (
        <button key={name} aria-label={name} className="flex shrink-0 items-center gap-[7px]">
          <Icon />
          {menu && <CaretDown className="text-[#999]" />}
        </button>
      ))}
    </div>
  );
}

export default function App() {
  const [activeTab, setActiveTab] = useState(5);

  return (
    <div className={clsx('flex min-h-screen flex-col overflow-hidden bg-white', FONT)}>
      <AddinBar />
      <div className="flex flex-1">
        <div className="flex w-[511px] shrink-0 flex-col">
          <CommandTabs active={activeTab} onSelect={setActiveTab} />
          <FeaturePanel />
        </div>
        <main className="relative flex flex-1 flex-col bg-[linear-gradient(to_bottom,transparent_63%,#ffffff70_69%,#ffffffc8_74%,#fefefe_81%),radial-gradient(83%_43%_at_0%_0%,#fefefe_72%,#f4f5f8_92%,#e4e7ee_118%,#dbdfe8_150%)]">
          <GearModel />
          <ViewToolbar />
          <p className="relative mt-auto mr-[14px] self-end pb-1 font-['Roboto',sans-serif] text-xs leading-5 text-[#a0a0a0]">
            CSDN @VMason
          </p>
        </main>
      </div>
    </div>
  );
}
